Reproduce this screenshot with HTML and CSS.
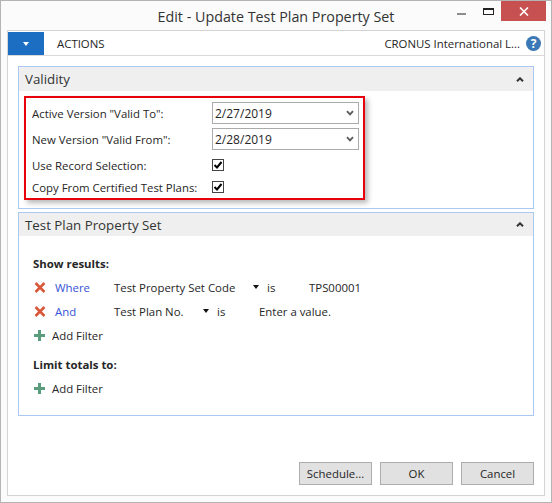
FILE: index.html
```html
<!DOCTYPE html>
<html>
<head>
<meta charset="utf-8">
<link rel="stylesheet" href="styles.css">
</head>
<body>
<div class="window">
  <div class="titlebar">
    <div class="title">Edit - Update Test Plan Property Set</div>
    <div class="controls">
      <span class="min"></span>
      <span class="max"></span>
      <span class="close"><svg width="10" height="9" viewBox="0 0 10 9"><path d="M1 0.5 L9 8.5 M9 0.5 L1 8.5" stroke="#fff" stroke-width="1.6" fill="none"/></svg></span>
    </div>
  </div>
  <div class="frame">
    <div class="actionbar">
      <div class="menu-btn"><span class="tri"></span></div>
      <div class="actions">ACTIONS</div>
      <div class="company">CRONUS International L...</div>
      <div class="help">?</div>
    </div>
    <div class="content">
      <section class="panel">
        <div class="panel-head">
          <span>Validity</span>
          <svg class="collapse" width="8" height="5" viewBox="0 0 8 5"><polyline points="1,4.3 4,1.3 7,4.3" stroke="#333" stroke-width="2" fill="none"/></svg>
        </div>
        <div class="panel-body">
          <div class="redbox">
            <div class="field">
              <span class="label">Active Version "Valid To":</span>
              <div class="select"><span>2/27/2019</span><svg width="8" height="6" viewBox="0 0 8 6"><polyline points="1,1.2 4,4.4 7,1.2" stroke="#5a5a5a" stroke-width="1.8" fill="none"/></svg></div>
            </div>
            <div class="field gap">
              <span class="label">New Version "Valid From":</span>
              <div class="select"><span>2/28/2019</span><svg width="8" height="6" viewBox="0 0 8 6"><polyline points="1,1.2 4,4.4 7,1.2" stroke="#5a5a5a" stroke-width="1.8" fill="none"/></svg></div>
            </div>
            <div class="field gap">
              <span class="label">Use Record Selection:</span>
              <span class="check"><svg width="10" height="10" viewBox="0 0 10 10"><polyline points="1.5,5 4,7.5 8.5,2" stroke="#000" stroke-width="2" fill="none"/></svg></span>
            </div>
            <div class="field">
              <span class="label">Copy From Certified Test Plans:</span>
              <span class="check"><svg width="10" height="10" viewBox="0 0 10 10"><polyline points="1.5,5 4,7.5 8.5,2" stroke="#000" stroke-width="2" fill="none"/></svg></span>
            </div>
          </div>
        </div>
      </section>
      <section class="panel panel2">
        <div class="panel-head short">
          <span>Test Plan Property Set</span>
          <svg class="collapse" width="8" height="5" viewBox="0 0 8 5"><polyline points="1,4.3 4,1.3 7,4.3" stroke="#333" stroke-width="2" fill="none"/></svg>
        </div>
        <div class="filters">
          <div class="row bold">Show results:</div>
          <div class="row">
            <svg class="icon" width="12" height="11" viewBox="0 0 12 11"><path d="M1.5 1 L10.5 10 M10.5 1 L1.5 10" stroke="#d9573b" stroke-width="2.6" fill="none"/></svg>
            <span class="op">Where</span>
            <span class="fname w1">Test Property Set Code</span>
            <span class="caret"></span>
            <span class="is">is</span>
            <span>TPS00001</span>
          </div>
          <div class="row">
            <svg class="icon" width="12" height="11" viewBox="0 0 12 11"><path d="M1.5 1 L10.5 10 M10.5 1 L1.5 10" stroke="#d9573b" stroke-width="2.6" fill="none"/></svg>
            <span class="op">And</span>
            <span class="fname w2">Test Plan No.</span>
            <span class="caret"></span>
            <span class="is">is</span>
            <span>Enter a value.</span>
          </div>
          <div class="row">
            <svg class="plus" width="11" height="11" viewBox="0 0 11 11"><path d="M5.5 0 V11 M0 5.5 H11" stroke="#5a9c7c" stroke-width="3" fill="none"/></svg>
            <span>Add Filter</span>
          </div>
          <div class="row bold limit">Limit totals to:</div>
          <div class="row">
            <svg class="plus" width="11" height="11" viewBox="0 0 11 11"><path d="M5.5 0 V11 M0 5.5 H11" stroke="#5a9c7c" stroke-width="3" fill="none"/></svg>
            <span>Add Filter</span>
          </div>
        </div>
      </section>
    </div>
    <div class="footer">
      <button class="btn">Schedule...</button>
      <button class="btn">OK</button>
      <button class="btn">Cancel</button>
    </div>
  </div>
</div>
</body>
</html>
```

FILE: styles.css
```css
* { box-sizing: border-box; }
html, body { margin: 0; padding: 0; }
body {
  font-family: "Segoe UI", "Open Sans", sans-serif;
  font-size: 11.4px;
  color: #262626;
  background: #fff;
}
.window {
  width: 552px;
  height: 503px;
  border: 1px solid #b4b4b4;
  background: #fbfbfb;
  display: flex;
  flex-direction: column;
}
.titlebar {
  height: 29px;
  display: grid;
  grid-template-columns: 1fr auto 1fr;
  align-items: start;
}
.title {
  grid-column: 2;
  font-size: 14.3px;
  line-height: 29px;
  padding-top: 1px;
  color: #333;
  white-space: nowrap;
}
.controls {
  grid-column: 3;
  justify-self: end;
  display: flex;
  align-items: flex-start;
  margin-right: 5px;
}
.min {
  width: 9px;
  height: 2px;
  background: #8c8c8c;
  margin-top: 12px;
  margin-right: 17px;
}
.max {
  width: 11px;
  height: 7px;
  border: 1px solid #222;
  border-top-width: 2px;
  margin-top: 7px;
  margin-right: 7px;
}
.close {
  width: 45px;
  height: 20px;
  background: #c75050;
  display: flex;
  align-items: center;
  justify-content: center;
}
.frame {
  flex: 1;
  margin: 0 6px 6px;
  border: 1px solid #d3d3d3;
  background: #fff;
  display: flex;
  flex-direction: column;
}
.actionbar {
  height: 25px;
  padding-top: 1px;
  border-bottom: 1px solid #d9d9d9;
  display: flex;
  align-items: center;
}
.menu-btn {
  width: 36px;
  align-self: stretch;
  background: #1b6ec2;
  display: flex;
  align-items: center;
  justify-content: center;
}
.tri {
  width: 0;
  height: 0;
  border-left: 3.5px solid transparent;
  border-right: 3.5px solid transparent;
  border-top: 4px solid #fff;
}
.actions { margin-left: 13px; }
.company { margin-left: auto; }
.help {
  width: 15px;
  height: 15px;
  border-radius: 50%;
  background: #3b78b6;
  color: #fff;
  font-weight: bold;
  font-size: 12px;
  line-height: 15px;
  text-align: center;
  margin: 0 3px 0 6px;
}
.content { padding: 10px 10px 0; }
.panel { border: 1px solid #a9c9f2; }
.panel2 { margin-top: 3px; }
.panel-head {
  height: 24px;
  background: #efefef;
  display: flex;
  align-items: center;
  justify-content: space-between;
  padding: 0 9px 0 6px;
  font-size: 13.3px;
  color: #333;
}
.panel-head.short { height: 23px; }
.panel-body { padding: 5px 0 8px 5px; }
.redbox {
  width: 341px;
  border: 2px solid #e8000d;
  box-shadow: 3px 3px 5px rgba(0, 0, 0, 0.28);
  padding: 4px 4px 0 6px;
}
.field {
  display: flex;
  align-items: center;
  height: 22px;
}
.field.gap { margin-top: 4px; }
.label { width: 180px; white-space: nowrap; }
.select {
  width: 147px;
  height: 22px;
  border: 1px solid #ababab;
  display: flex;
  align-items: center;
  justify-content: space-between;
  padding: 0 4px 0 2px;
  font-size: 12px;
}
.check {
  width: 12px;
  height: 12px;
  border: 1px solid #444;
  display: flex;
  align-items: center;
  justify-content: center;
}
.filters { padding: 15px 0 15px 14px; }
.row {
  height: 24px;
  display: flex;
  align-items: center;
  white-space: nowrap;
}
.bold { font-weight: bold; }
.limit { margin-top: 5px; }
.icon { margin-left: 1px; margin-right: 9px; }
.plus { margin-left: 1px; margin-right: 7px; }
.op { width: 59px; color: #3452d6; }
.fname { display: inline-block; }
.w1 { width: 139px; }
.w2 { width: 89px; }
.caret {
  width: 0;
  height: 0;
  border-left: 3.5px solid transparent;
  border-right: 3.5px solid transparent;
  border-top: 4px solid #111;
  margin-right: 8px;
}
.is { width: 42px; }
.footer {
  margin-top: auto;
  display: flex;
  justify-content: flex-end;
  gap: 8px;
  padding: 0 10px 10px 0;
}
.btn {
  width: 73px;
  height: 23px;
  border: 1px solid #adadad;
  background: #e1e1e1;
  font-family: inherit;
  font-size: 11.4px;
  color: #262626;
  padding: 0;
}
```
